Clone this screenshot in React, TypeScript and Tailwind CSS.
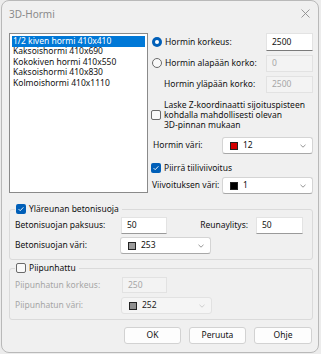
import React from "react";

function Check({ checked }: { checked?: boolean }) {
  return checked ? (
    <span className="flex h-[10px] w-[10px] shrink-0 items-center justify-center rounded-[2px] bg-[#005fb8]">
      <svg width="8" height="8" viewBox="0 0 8 8">
        <path d="M1.6 4.1 L3.2 5.7 L6.4 2.3" fill="none" stroke="white" strokeWidth="0.9" />
      </svg>
    </span>
  ) : (
    <span className="block h-[10px] w-[10px] shrink-0 rounded-[2px] border border-[#6a6a6a] bg-[#f9f9f9]" />
  );
}

function Radio({ checked }: { checked?: boolean }) {
  return checked ? (
    <span className="flex h-[10px] w-[10px] shrink-0 items-center justify-center rounded-full bg-[#005fb8]">
      <span className="block h-[4px] w-[4px] rounded-full bg-white" />
    </span>
  ) : (
    <span className="block h-[10px] w-[10px] shrink-0 rounded-full border border-[#6a6a6a] bg-[#f9f9f9]" />
  );
}

function Chevron({ disabled }: { disabled?: boolean }) {
  return (
    <svg width="6" height="4" viewBox="0 0 6 4" className="ml-auto">
      <path d="M0.5 0.8 L3 3.2 L5.5 0.8" fill="none" stroke={disabled ? "#c4c4c4" : "#7a7a7a"} strokeWidth="0.8" />
    </svg>
  );
}

function Combo({ color, value, disabled }: { color: string; value: string; disabled?: boolean }) {
  return (
    <div
      className={
        disabled
          ? "flex h-[17px] w-[91px] shrink-0 items-center rounded-[3px] border border-[#e2e2e2] bg-[#f5f5f5] pl-[7px] pr-[6px]"
          : "flex h-[17px] w-[91px] shrink-0 items-center rounded-[3px] border border-[#d4d4d4] border-b-[#a8a8a8] bg-white pl-[7px] pr-[6px]"
      }
    >
      <span className={"block h-[8px] w-[8px] border border-[#222] " + color} />
      <span className={disabled ? "ml-[5px] text-[#222]" : "ml-[5px] text-[#111]"}>{value}</span>
      <Chevron disabled={disabled} />
    </div>
  );
}

export default function App() {
  return (
    <div className="h-[354px] w-[321px] bg-[#ececec] font-['Noto_Sans',sans-serif] text-[8.5px] text-[#111]">
      <div className="ml-[1px] flex h-[353px] w-[318px] flex-col rounded-[8px] border border-[#b9b9b9] bg-[#f0f0f0] pl-[7px] pr-[5px]">
        {/* title bar */}
        <div className="flex h-[27px] shrink-0 items-center justify-between -mr-[1px]">
          <span className="text-[10px] text-[#8a8a8a]">3D-Hormi</span>
          <svg width="9" height="9" viewBox="0 0 9 9" className="mr-[4px] -mt-[2px]">
            <path d="M0.5 0.5 L8.5 8.5 M8.5 0.5 L0.5 8.5" stroke="#8c8c8c" strokeWidth="0.9" />
          </svg>
        </div>

        {/* top section */}
        <div className="mt-[5px] flex">
          <div className="h-[160px] w-[139px] shrink-0 border border-[#8a8a8a] bg-white px-[2px] py-[2px]">
            <div className="flex h-[10.5px] items-center bg-[#0078d7] pl-[1px] text-white">1/2 kiven hormi 410x410</div>
            <div className="flex h-[10.5px] items-center pl-[1px]">Kaksoishormi 410x690</div>
            <div className="flex h-[10.5px] items-center pl-[1px]">Kokokiven hormi 410x550</div>
            <div className="flex h-[10.5px] items-center pl-[1px]">Kaksoishormi 410x830</div>
            <div className="flex h-[10.5px] items-center pl-[1px]">Kolmoishormi 410x1110</div>
          </div>

          <div className="ml-[3px] flex flex-1 flex-col">
            <div className="flex h-[18px] items-center">
              <span className="ml-[1px]">
                <Radio checked />
              </span>
              <span className="ml-[3px]">Hormin korkeus:</span>
              <div className="ml-auto flex h-[18px] w-[47px] items-center border border-[#e3e3e3] border-b-[#7a7a7a] bg-white pl-[5px]">
                2500
              </div>
            </div>
            <div className="mt-[3px] flex h-[18px] items-center">
              <span className="ml-[1px]">
                <Radio />
              </span>
              <span className="ml-[3px]">Hormin alapään korko:</span>
              <div className="ml-auto flex h-[17px] w-[47px] items-center border border-[#e2e2e2] bg-[#f3f3f3] pl-[5px] text-[#a6a6a6]">
                0
              </div>
            </div>
            <div className="mt-[3px] flex h-[18px] items-center">
              <span className="ml-[13px]">Hormin yläpään korko:</span>
              <div className="ml-auto flex h-[17px] w-[47px] items-center border border-[#e2e2e2] bg-[#f3f3f3] pl-[5px] text-[#a6a6a6]">
                2500
              </div>
            </div>
            <div className="mt-[7px] flex items-center">
              <Check />
              <div className="ml-[3px] leading-[10px]">
                <div>Laske Z-koordinaatti sijoituspisteen</div>
                <div>kohdalla mahdollisesti olevan</div>
                <div>3D-pinnan mukaan</div>
              </div>
            </div>
            <div className="mt-[7px] flex h-[17px] items-center">
              <span className="ml-[2px]">Hormin väri:</span>
              <span className="ml-auto">
                <Combo color="bg-[#d40000]" value="12" />
              </span>
            </div>
            <div className="mt-[8px] flex h-[12px] items-center">
              <Check checked />
              <span className="ml-[3px]">Piirrä tiiliviivoitus</span>
            </div>
            <div className="mt-[3px] flex h-[17px] items-center">
              <span className="ml-[1px]">Viivoituksen väri:</span>
              <span className="ml-auto">
                <Combo color="bg-black" value="1" />
              </span>
            </div>
          </div>
        </div>

        {/* group 1 */}
        <fieldset className="mt-[9px] rounded-[3px] border border-[#dadada] pl-[5px] pr-[9px] pt-[2px] pb-[5px]">
          <legend className="flex h-[12px] items-center px-[1px]">
            <Check checked />
            <span className="ml-[3px] pr-[2px]">Yläreunan betonisuoja</span>
          </legend>
          <div className="flex h-[17px] items-center">
            <span className="w-[106px] shrink-0">Betonisuojan paksuus:</span>
            <div className="flex h-[17px] w-[46px] items-center border border-[#e3e3e3] border-b-[#9a9a9a] bg-white pl-[5px]">50</div>
            <span className="ml-auto">Reunaylitys:</span>
            <div className="ml-[8px] flex h-[17px] w-[47px] items-center border border-[#e3e3e3] border-b-[#9a9a9a] bg-white pl-[5px]">50</div>
          </div>
          <div className="mt-[3px] flex h-[17px] items-center">
            <span className="w-[105px] shrink-0">Betonisuojan väri:</span>
            <Combo color="bg-[#9a9a9a]" value="253" />
          </div>
        </fieldset>

        {/* group 2 */}
        <fieldset className="mt-[2px] rounded-[3px] border border-[#dadada] pl-[5px] pr-[9px] pt-[3px] pb-[5px]">
          <legend className="flex h-[12px] items-center px-[1px]">
            <Check />
            <span className="ml-[3px] pr-[2px]">Piipunhattu</span>
          </legend>
          <div className="flex h-[16px] items-center text-[#a6a6a6]">
            <span className="w-[107px] shrink-0">Piipunhatun korkeus:</span>
            <div className="flex h-[16px] w-[45px] items-center border border-[#e2e2e2] bg-[#f3f3f3] pl-[5px]">250</div>
          </div>
          <div className="mt-[4px] flex h-[17px] items-center">
            <span className="w-[106px] shrink-0 text-[#a6a6a6]">Piipunhatun väri:</span>
            <Combo color="bg-[#8f8f8f]" value="252" disabled />
          </div>
        </fieldset>

        {/* buttons */}
        <div className="mt-[7px] flex justify-end gap-[8px] pr-[1px]">
          <button className="flex h-[17px] w-[57px] items-center justify-center rounded-[3px] border border-[#d2d2d2] bg-[#fdfdfd]">OK</button>
          <button className="flex h-[17px] w-[57px] items-center justify-center rounded-[3px] border border-[#d2d2d2] bg-[#fdfdfd]">Peruuta</button>
          <button className="flex h-[17px] w-[58px] items-center justify-center rounded-[3px] border border-[#d2d2d2] bg-[#fdfdfd]">Ohje</button>
        </div>
      </div>
    </div>
  );
}
